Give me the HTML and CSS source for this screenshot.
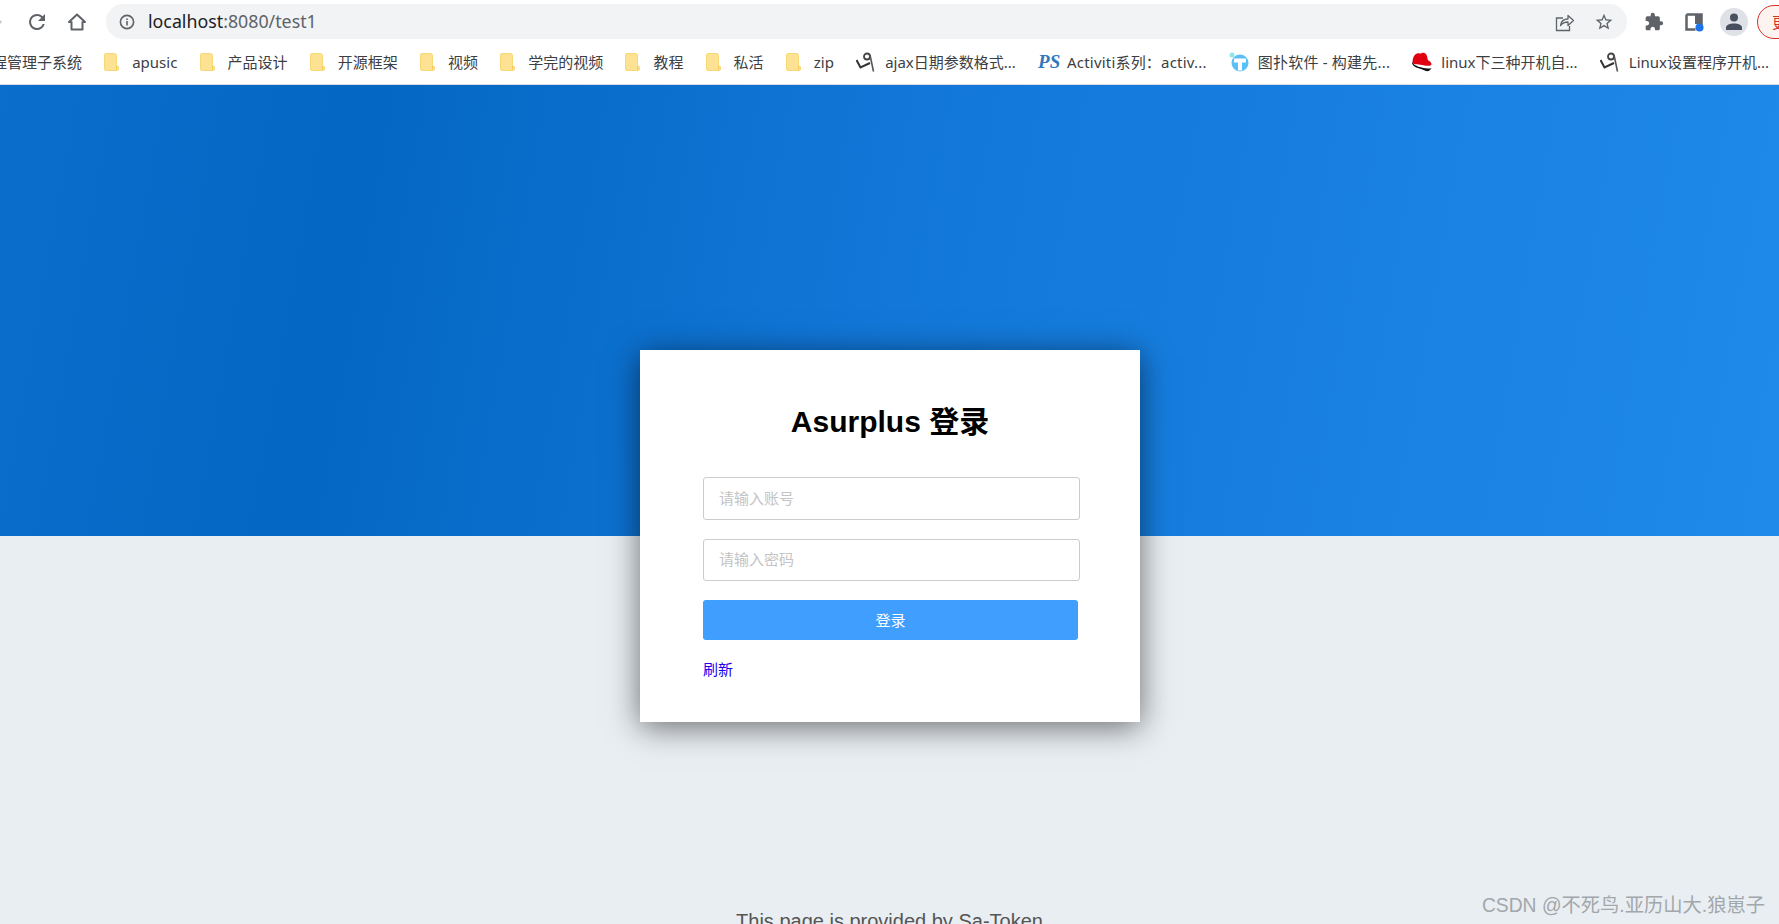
FILE: index.html
```html
<!DOCTYPE html>
<html lang="en">
<head>
    <meta charset="UTF-8">
    <meta name="viewport" content="width=device-width, initial-scale=1.0">
    <title>Asurplus 登录</title>
    <link rel="stylesheet" href="styles.css">
</head>
<body>
    <svg class="defs" width="0" height="0">
        <symbol id="folder" viewBox="0 0 15 18">
            <path d="M2 .5h8.5a2 2 0 0 1 2 2v10.5h.5a1.5 1.5 0 0 1 1.5 1.5v1.5a1.5 1.5 0 0 1-1.5 1.5H2a1.5 1.5 0 0 1-1.5-1.5V2A1.5 1.5 0 0 1 2 .5z" fill="#fde293" stroke="#f8d775"/>
            <path d="M12.5 13v3.5" stroke="#f3c95c" fill="none"/>
        </symbol>
        <symbol id="swirl" viewBox="0 0 20 20">
            <circle cx="11" cy="4.5" r="3" fill="none" stroke="#444" stroke-width="1.8"/>
            <path d="M14 3l3.5 16.5" fill="none" stroke="#555" stroke-width="1.6"/>
            <path d="M.5 8l4 7.5L14 11" fill="none" stroke="#333" stroke-width="2"/>
        </symbol>
    </svg>

    <div class="toolbar">
        <svg class="nav-forward" width="24" height="24" viewBox="0 0 24 24"><path d="M12 4l-1.4 1.4 5.6 5.6H4v2h12.2l-5.6 5.6L12 20l8-8z" fill="#c4c7cb"/></svg>
        <svg class="nav-icon" width="24" height="24" viewBox="0 0 24 24"><path d="M17.65 6.35A7.96 7.96 0 0 0 12 4a8 8 0 1 0 7.73 10h-2.08A6 6 0 1 1 12 6c1.66 0 3.14.69 4.22 1.78L13 11h7V4z" fill="#5f6368"/></svg>
        <svg class="nav-icon" width="24" height="24" viewBox="0 0 24 24"><path d="M12 4.5L4 12h2.5v7.5h11V12H20z" fill="none" stroke="#5f6368" stroke-width="2" stroke-linejoin="round"/></svg>
        <div class="omnibox">
            <svg width="16" height="16" viewBox="0 0 16 16"><circle cx="8" cy="8" r="6.6" fill="none" stroke="#5f6368" stroke-width="1.6"/><path d="M7.2 7h1.6v4.5H7.2zM7.2 4.4h1.6V6H7.2z" fill="#5f6368"/></svg>
            <span class="url"><span class="url-host">localhost</span>:8080/test1</span>
            <svg class="share" width="20" height="20" viewBox="0 0 20 20"><path d="M8 6H1.500v12.500h13V14" fill="none" stroke="#5f6368" stroke-width="1.300"/><path d="M5.500 13.500c.6-4 3.500-6.500 7.500-6.500V3.500l5.500 5-5.500 5V10c-3 0-5.500 1-7.500 3.500z" fill="none" stroke="#5f6368" stroke-width="1.300" stroke-linejoin="round"/></svg>
            <svg width="20" height="20" viewBox="0 0 24 24"><path d="M22 9.240l-7.190-.62L12 2 9.190 8.630 2 9.240l5.460 4.730L5.820 21 12 17.270 18.180 21l-1.630-7.030L22 9.240zM12 15.400l-3.760 2.270 1-4.280-3.320-2.880 4.380-.38L12 6.100l1.710 4.040 4.380.38-3.320 2.880 1 4.280L12 15.400z" fill="#5f6368"/></svg>
        </div>
        <svg class="ext" width="20" height="20" viewBox="0 0 24 24"><path d="M20.500 11H19V7c0-1.100-.9-2-2-2h-4V3.500a2.500 2.500 0 0 0-5 0V5H4c-1.100 0-1.990.9-1.990 2v3.800H3.500c1.490 0 2.700 1.210 2.700 2.700s-1.210 2.700-2.700 2.700H2V20c0 1.100.9 2 2 2h3.800v-1.500c0-1.490 1.210-2.700 2.700-2.700s2.700 1.210 2.700 2.700V22H17c1.100 0 2-.9 2-2v-4h1.500a2.500 2.500 0 0 0 0-5z" fill="#5f6368"/></svg>
        <svg class="panel" width="20" height="20" viewBox="0 0 20 20"><path d="M2.500 2.500h15v11M2.500 2.500v15h9" fill="none" stroke="#5f6368" stroke-width="2.500"/><path d="M11 3h7v9h-7z" fill="#5f6368"/><circle cx="15.500" cy="15.500" r="4" fill="#1a73e8"/></svg>
        <div class="avatar">
            <svg width="20" height="20" viewBox="0 0 20 20"><circle cx="10" cy="5.500" r="4" fill="#48505f"/><path d="M2 18v-2.500c0-2.500 4-4 8-4s8 1.500 8 4V18z" fill="#48505f"/></svg>
        </div>
        <div class="update-pill">更新</div>
    </div>

    <div class="bookmarks">
        <span class="bookmark">程管理子系统</span>
        <span class="bookmark"><svg class="bm-icon"><use href="#folder"/></svg>apusic</span>
        <span class="bookmark"><svg class="bm-icon"><use href="#folder"/></svg>产品设计</span>
        <span class="bookmark"><svg class="bm-icon"><use href="#folder"/></svg>开源框架</span>
        <span class="bookmark"><svg class="bm-icon"><use href="#folder"/></svg>视频</span>
        <span class="bookmark"><svg class="bm-icon"><use href="#folder"/></svg>学完的视频</span>
        <span class="bookmark"><svg class="bm-icon"><use href="#folder"/></svg>教程</span>
        <span class="bookmark"><svg class="bm-icon"><use href="#folder"/></svg>私活</span>
        <span class="bookmark"><svg class="bm-icon"><use href="#folder"/></svg>zip</span>
        <span class="bookmark"><svg class="bm-favicon"><use href="#swirl"/></svg>ajax日期参数格式...</span>
        <span class="bookmark bookmark-wide"><span class="ps-icon">PS</span>Activiti系列：activ...</span>
        <span class="bookmark bookmark-wide"><svg class="bm-favicon" viewBox="0 0 20 20"><circle cx="3" cy="3" r="2.500" fill="#8fe6ea"/><circle cx="11" cy="11" r="8.500" fill="#5cc0f5"/><path d="M5 6.500h12v4h-4v8H9v-8H5z" fill="#fff"/></svg>图扑软件 - 构建先...</span>
        <span class="bookmark"><svg class="bm-favicon" viewBox="0 0 20 20"><path d="M.5 11.500C.5 6 2 2.500 5 1.500c2-.6 3 .3 4.500-.3 2.500-1 5 .3 5.500 3l1 4c2 1 3.500 2.500 3.500 4-.5 2-4 2-8 1-4-.8-9-.8-11-1.700z" fill="#e00010"/><path d="M0 10c-.5 3.500 4 6 9 7 2 .4 3 1.500 5 2 2.500.5 4.500-.5 5.500-3-2 1-6 .5-9-.3-4-1-8.500-2-10.500-5.700z" fill="#111"/></svg>linux下三种开机自...</span>
        <span class="bookmark"><svg class="bm-favicon"><use href="#swirl"/></svg>Linux设置程序开机...</span>
    </div>

    <div class="page">
        <div class="band"></div>
        <div class="login-box">
            <h1>Asurplus 登录</h1>
            <form class="login-form">
                <input class="login-input" type="text" placeholder="请输入账号">
                <input class="login-input input-short" type="password" placeholder="请输入密码">
                <button class="login-btn" type="button">登录</button>
                <a class="refresh" href="#">刷新</a>
            </form>
        </div>
        <p class="provided">This page is provided by Sa-Token</p>
        <div class="watermark">CSDN @不死鸟.亚历山大.狼崽子</div>
    </div>
</body>
</html>
```

FILE: styles.css
```css
html, body {
    height: 100%;
}
body {
    margin: 0;
    overflow: hidden;
    display: flex;
    flex-direction: column;
    background-color: #e9eef2;
    font-family: "Noto Sans", "Noto Sans CJK SC", sans-serif;
}
.defs {
    position: absolute;
}

/* browser chrome */
.toolbar {
    display: flex;
    flex: none;
    align-items: center;
    height: 40px;
    padding-top: 3px;
    box-sizing: border-box;
    background-color: #fff;
    white-space: nowrap;
}
.nav-forward {
    margin-left: -18px;
    flex: none;
}
.nav-icon {
    margin-left: 19px;
    flex: none;
}
.nav-icon + .nav-icon {
    margin-left: 16px;
}
.omnibox {
    display: flex;
    align-items: center;
    flex: none;
    width: 1521px;
    height: 35px;
    margin-left: 17px;
    padding: 0 13px 0 13px;
    box-sizing: border-box;
    background-color: #f1f3f4;
    border-radius: 18px;
}
.url {
    margin-left: 13px;
    margin-bottom: 2px;
    font-size: 17.8px;
    color: #5f6368;
}
.url-host {
    color: #202124;
}
.share {
    margin-left: auto;
    margin-right: 19px;
}
.ext {
    flex: none;
    margin-left: 17px;
}
.panel {
    flex: none;
    margin-left: 20px;
}
.avatar {
    display: flex;
    align-items: center;
    justify-content: center;
    flex: none;
    width: 28px;
    height: 28px;
    margin-left: 16px;
    background-color: #dee1e6;
    border-radius: 50%;
}
.update-pill {
    flex: none;
    height: 34px;
    margin-left: 9px;
    padding: 0 14px;
    box-sizing: border-box;
    line-height: 32px;
    font-size: 15px;
    color: #d93025;
    background-color: #fdf3f1;
    border: 1px solid #d93025;
    border-radius: 17px;
}

.bookmarks {
    display: flex;
    flex: none;
    align-items: center;
    gap: 22.2px;
    height: 45px;
    margin-left: -8px;
    padding-bottom: 1px;
    box-sizing: border-box;
    background-color: #fff;
    border-bottom: 1px solid #dadce0;
    font-size: 15px;
    color: #3c4043;
    white-space: nowrap;
}
.bookmark {
    display: flex;
    align-items: center;
    flex: none;
}
.bookmark-wide {
    letter-spacing: 0.2px;
}
.bm-icon {
    width: 15px;
    height: 18px;
    margin-right: 13px;
}
.bm-favicon {
    width: 20px;
    height: 20px;
    margin-right: 9px;
}
.ps-icon {
    width: 20px;
    margin-right: 9px;
    font-family: "Liberation Serif", serif;
    font-style: italic;
    font-weight: bold;
    font-size: 19px;
    color: #2f78bd;
}

/* page */
.page {
    position: relative;
    flex: 1;
    min-height: 0;
}
.band {
    height: 451px;
    background: linear-gradient(100deg, #0b6dcc 0%, #0467c3 20%, #1277d8 50%, #1f8aea 100%);
}
.login-box {
    position: absolute;
    top: 265px;
    left: 640px;
    width: 500px;
    height: 372px;
    padding-top: 54px;
    box-sizing: border-box;
    background-color: #fff;
    box-shadow: 0 5px 30px rgba(0, 0, 0, 0.55);
}
.login-box h1 {
    margin: 0;
    font-family: "Liberation Sans", "Noto Sans CJK SC", sans-serif;
    font-size: 30px;
    line-height: 36px;
    text-align: center;
    color: #000;
}
.login-form {
    display: flex;
    flex-direction: column;
    align-items: flex-start;
    width: 377px;
    margin: 37px 0 0 63px;
}
.login-input {
    width: 100%;
    height: 43px;
    margin-bottom: 19px;
    padding: 0 15px 2px;
    box-sizing: border-box;
    border: 1px solid #ccc;
    border-radius: 3px;
    font-family: inherit;
    font-size: 15px;
}
.input-short {
    height: 42px;
}
.login-input::placeholder {
    color: #c4c4c4;
}
.login-btn {
    width: 375px;
    height: 40px;
    padding: 0 0 2px;
    border: none;
    border-radius: 3px;
    background-color: #409eff;
    color: #fff;
    font-family: inherit;
    font-size: 15px;
}
.refresh {
    margin-top: 19px;
    font-size: 15px;
    line-height: 20px;
    color: #2200ee;
    text-decoration: none;
}
.provided {
    margin: 374px 0 0;
    font-family: "Liberation Sans", sans-serif;
    font-size: 20px;
    line-height: 22px;
    text-align: center;
    color: #555;
}
.watermark {
    position: absolute;
    right: 14px;
    bottom: 6px;
    font-family: "Liberation Sans", "Noto Sans CJK SC", sans-serif;
    font-size: 19.3px;
    color: #a2a7ab;
}
```
